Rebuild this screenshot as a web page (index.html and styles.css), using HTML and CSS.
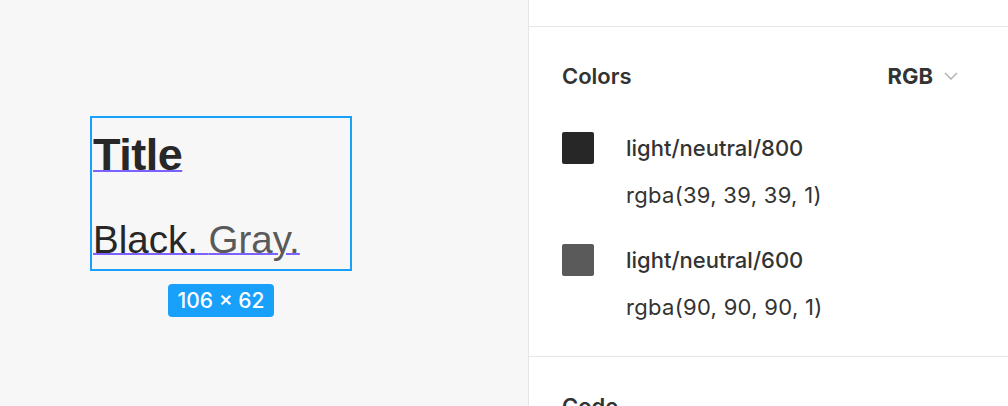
FILE: index.html
```html
<!DOCTYPE html>
<html>
<head>
<meta charset="utf-8">
<link rel="stylesheet" href="styles.css">
</head>
<body>
<div class="canvas">
  <div class="selection">
    <div class="frame">
      <div class="title"><span class="base">Title</span></div>
      <div class="body"><span class="base"><span class="black">Black.</span> <span class="gray">Gray.</span></span></div>
    </div>
    <div class="badge">106 × 62</div>
  </div>
</div>
<div class="panel">
  <div class="topstrip"></div>
  <section class="section">
    <div class="header">
      <span class="heading">Colors</span>
      <span class="mode">RGB
        <svg class="chev" width="14" height="8" viewBox="0 0 14 8"><polyline points="1,1 7,7 13,1" fill="none" stroke="#b3b3b3" stroke-width="1.5"/></svg>
      </span>
    </div>
    <div class="items">
      <div class="item">
        <div class="swatch s800"></div>
        <div class="info">
          <div class="name">light/neutral/800</div>
          <div class="value">rgba(39, 39, 39, 1)</div>
        </div>
      </div>
      <div class="item">
        <div class="swatch s600"></div>
        <div class="info">
          <div class="name">light/neutral/600</div>
          <div class="value">rgba(90, 90, 90, 1)</div>
        </div>
      </div>
    </div>
  </section>
  <section class="section">
    <div class="header">
      <span class="heading">Code</span>
    </div>
  </section>
</div>
</body>
</html>
```
FILE: styles.css
```css
html, body {
  margin: 0;
  padding: 0;
}
body {
  display: flex;
  width: 1008px;
  height: 406px;
  overflow: hidden;
  background: #ffffff;
}
.canvas {
  position: relative;
  width: 528px;
  flex: none;
  background: #f7f7f7;
  border-right: 1px solid #e6e6e6;
}
.selection {
  position: absolute;
  left: 90px;
  top: 116px;
  width: 262px;
  display: flex;
  flex-direction: column;
  align-items: center;
}
.frame {
  box-sizing: border-box;
  width: 262px;
  height: 155px;
  border: 2px solid #18a0fb;
  padding-left: 1px;
  font-family: "Liberation Sans", Arial, sans-serif;
}
.base {
  text-decoration: underline;
  text-decoration-color: #7b61ff;
  text-decoration-thickness: 2px;
  text-underline-offset: 0;
}
.title {
  margin-top: 11px;
  font-size: 45px;
  line-height: 52px;
  font-weight: 700;
  color: #272727;
  letter-spacing: -0.5px;
}
.body {
  margin-top: 38px;
  font-size: 38.5px;
  line-height: 42px;
  font-weight: 400;
}
.black { color: #272727; }
.gray { color: #5a5a5a; }
.badge {
  margin-top: 13px;
  height: 33px;
  padding: 0 10px;
  box-sizing: border-box;
  background: #18a0fb;
  border-radius: 4px;
  color: #ffffff;
  font-family: Inter, "Noto Sans", sans-serif;
  font-size: 21px;
  font-weight: 500;
  line-height: 33px;
  white-space: nowrap;
}
.panel {
  flex: 1;
  display: flex;
  flex-direction: column;
  font-family: Inter, "Noto Sans", sans-serif;
  color: #333333;
}
.topstrip {
  height: 26px;
  flex: none;
  border-bottom: 1px solid #e6e6e6;
}
.section {
  padding: 37px 50px 37px 33px;
  border-bottom: 1px solid #e6e6e6;
}
.header {
  display: flex;
  justify-content: space-between;
  align-items: center;
  height: 24px;
}
.heading {
  font-size: 22px;
  font-weight: 600;
  line-height: 24px;
}
.mode {
  display: flex;
  align-items: center;
  gap: 11px;
  font-size: 22px;
  font-weight: 700;
  line-height: 24px;
}
.chev {
  display: block;
}
.items {
  margin-top: 44px;
  display: flex;
  flex-direction: column;
  gap: 37px;
}
.item {
  display: flex;
  gap: 32px;
}
.swatch {
  width: 32px;
  height: 32px;
  border-radius: 2px;
  flex: none;
}
.s800 { background: #272727; }
.s600 { background: #5a5a5a; }
.name {
  font-size: 22px;
  font-weight: 500;
  line-height: 32px;
}
.value {
  margin-top: 19px;
  font-size: 22px;
  font-weight: 400;
  line-height: 24px;
  letter-spacing: 0.3px;
}
```
